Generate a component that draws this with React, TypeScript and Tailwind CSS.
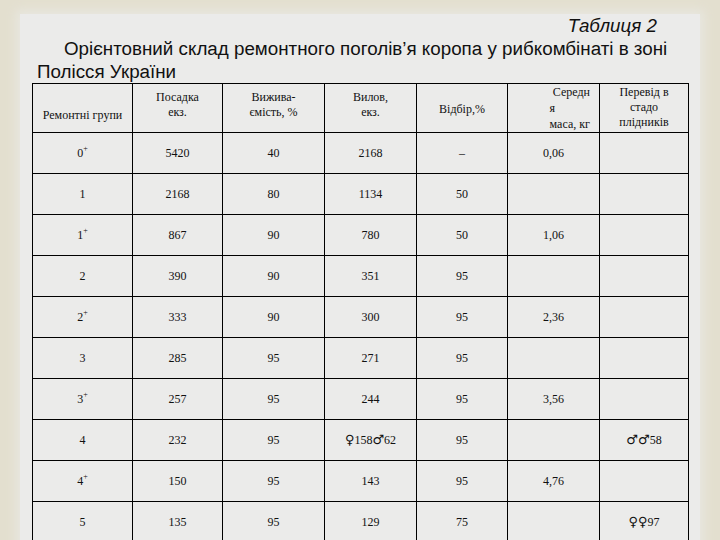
const cols = "grid grid-cols-[100px_90px_102px_92px_91px_92px_89px]";

const rows: { g: string; plus?: boolean; v: string[] }[] = [
  { g: "0", plus: true, v: ["5420", "40", "2168", "–", "0,06", ""] },
  { g: "1", v: ["2168", "80", "1134", "50", "", ""] },
  { g: "1", plus: true, v: ["867", "90", "780", "50", "1,06", ""] },
  { g: "2", v: ["390", "90", "351", "95", "", ""] },
  { g: "2", plus: true, v: ["333", "90", "300", "95", "2,36", ""] },
  { g: "3", v: ["285", "95", "271", "95", "", ""] },
  { g: "3", plus: true, v: ["257", "95", "244", "95", "3,56", ""] },
  { g: "4", v: ["232", "95", "♀158♂62", "95", "", "♂♂58"] },
  { g: "4", plus: true, v: ["150", "95", "143", "95", "4,76", ""] },
  { g: "5", v: ["135", "95", "129", "75", "", "♀♀97"] },
];

// gender signs look too small in the serif face, draw them with DejaVu Sans
function Value({ text }: { text: string }) {
  const parts = text.split(/([♀♂])/).filter(Boolean);
  return (
    <>
      {parts.map((p, i) =>
        p === "♀" || p === "♂" ? (
          <span key={i} className="font-['DejaVu_Sans',sans-serif] text-[13px]">
            {p}
          </span>
        ) : (
          <span key={i}>{p}</span>
        )
      )}
    </>
  );
}

function Cell({ children }: { children?: React.ReactNode }) {
  return (
    <div className="flex h-[41px] items-center justify-center border-r border-b border-black">
      {children}
    </div>
  );
}

export default function App() {
  return (
    <div className="h-[540px] w-[720px] overflow-hidden bg-[#e3dfcf]">
      <div className="mx-[20px] mt-[14px] h-[560px] bg-[#ebebea] shadow-[0_0_10px_4px_#e8e7e0]">
        <div className="pl-[12px] font-['Liberation_Sans',sans-serif] text-[18.8px] leading-[23px] text-[#111]">
          <div className="pr-[43px] text-right italic">Таблиця 2</div>
          <div className="pl-[5px]">
            <span className="pl-[27px]">
              Орієнтовний склад ремонтного поголів’я коропа у рибкомбінаті в зоні
            </span>
            <br />
            Полісся України
          </div>
        </div>

        <div className="ml-[12px] w-[657px] border-t border-l border-black font-['Liberation_Serif',serif] text-[12px] text-[#111]">
          <div className={`${cols} h-[49px] leading-[15px]`}>
            <div className="flex items-end justify-center border-r border-b border-black pb-[9px]">
              Ремонтні групи
            </div>
            <div className="border-r border-b border-black pt-[6px] text-center">
              Посадка
              <br />
              екз.
            </div>
            <div className="border-r border-b border-black pt-[6px] text-center">
              Вижива-
              <br />
              ємість, %
            </div>
            <div className="border-r border-b border-black pt-[6px] text-center">
              Вилов,
              <br />
              екз.
            </div>
            <div className="flex items-center justify-center border-r border-b border-black pt-[2px]">
              Відбір,%
            </div>
            <div className="border-r border-b border-black pr-[9px] text-right leading-[16px]">
              Середн
              <br />
              <span className="pr-[35px]">я</span>
              <br />
              маса, кг
            </div>
            <div className="border-r border-b border-black pt-[1px] text-center">
              Перевід в
              <br />
              стадо
              <br />
              плідників
            </div>
          </div>

          {rows.map((r, i) => (
            <div key={i} className={cols}>
              <Cell>
                {r.g}
                {r.plus && <sup className="text-[8px]">+</sup>}
              </Cell>
              {r.v.map((v, j) => (
                <Cell key={j}>
                  <Value text={v} />
                </Cell>
              ))}
            </div>
          ))}
        </div>
      </div>
    </div>
  );
}
